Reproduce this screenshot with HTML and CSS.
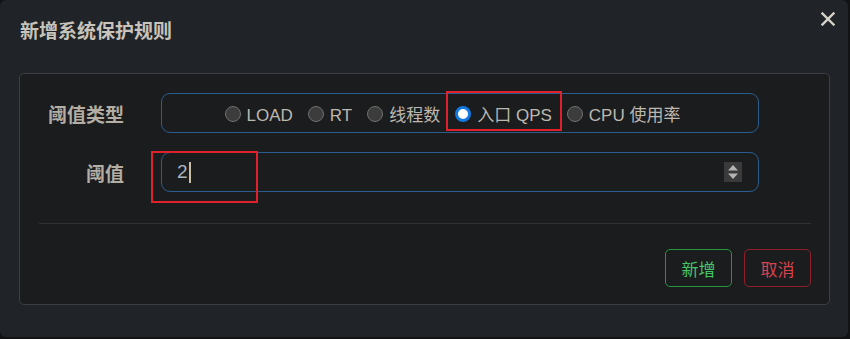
FILE: index.html
```html
<!DOCTYPE html>
<html lang="zh-CN">
<head>
    <meta charset="UTF-8">
    <meta name="viewport" content="width=device-width, initial-scale=1.0">
    <title>新增系统保护规则</title>
    <link rel="stylesheet" href="styles.css">
</head>
<body>
    <div class="modal">
        <div class="modal-header">
            <h4 class="modal-title">新增系统保护规则</h4>
            <button class="close" type="button" aria-label="关闭">
                <svg width="14" height="14" viewBox="0 0 14 14">
                    <path d="M1.5 1.5 L12.5 12.5 M12.5 1.5 L1.5 12.5" stroke="#d6d2ca" stroke-width="2.4" stroke-linecap="square"/>
                </svg>
            </button>
        </div>

        <form class="panel">
            <div class="form-row">
                <label class="form-label">阈值类型</label>
                <div class="radio-group">
                    <label class="radio"><span class="dot"></span>LOAD</label>
                    <label class="radio"><span class="dot"></span>RT</label>
                    <label class="radio"><span class="dot"></span>线程数</label>
                    <label class="radio"><span class="dot checked"></span>入口 QPS</label>
                    <label class="radio"><span class="dot"></span>CPU 使用率</label>
                </div>
            </div>

            <div class="form-row">
                <label class="form-label">阈值</label>
                <div class="number-input">
                    <span class="value">2</span><span class="caret"></span>
                    <span class="spinner">
                        <svg width="18" height="20" viewBox="0 0 18 20">
                            <path d="M9 3 L14 8.5 L4 8.5 Z M4 11.5 L14 11.5 L9 17 Z" fill="#b4b4b4"/>
                        </svg>
                    </span>
                </div>
            </div>

            <hr class="divider">

            <div class="actions">
                <button class="btn btn-success" type="button">新增</button>
                <button class="btn btn-danger" type="button">取消</button>
            </div>
        </form>

        <!-- 标注框 -->
        <div class="annot annot-qps"></div>
        <div class="annot annot-value"></div>
    </div>
</body>
</html>
```

FILE: styles.css
```css
body {
    margin: 0;
    background: #121314;
    font-family: "Liberation Sans", "Noto Sans CJK SC", sans-serif;
}
.modal {
    position: relative;
    width: 848px;
    height: 337px;
    box-sizing: border-box;
    background: #202327;
    border-radius: 6px;
}
.modal-header {
    display: flex;
    justify-content: space-between;
    align-items: flex-start;
    height: 73px;
    box-sizing: border-box;
    padding: 18px 13px 0 20px;
}
.modal-title {
    margin: 0;
    font-size: 19px;
    line-height: 28px;
    font-weight: bold;
    color: #c9c4bb;
}
.close {
    margin-top: -6px;
    padding: 0;
    border: 0;
    background: none;
    line-height: 0;
}
.panel {
    margin: 0 18px 0 19px;
    padding: 19px 18px 17px 19px;
    border: 1px solid #3b3e42;
    border-radius: 5px;
    background: #1b1c1e;
}
.form-row {
    display: flex;
    align-items: center;
    gap: 37px;
    margin-bottom: 19px;
}
.form-row:last-of-type {
    margin-bottom: 0;
}
.form-label {
    width: 85px;
    text-align: right;
    font-size: 19px;
    font-weight: bold;
    color: #b3ada3;
}
.radio-group,
.number-input {
    display: flex;
    align-items: center;
    width: 598px;
    height: 40px;
    box-sizing: border-box;
    border: 1px solid #2a5c8e;
    border-radius: 9px;
}
.radio-group {
    justify-content: center;
    padding-top: 5px;
}
.radio {
    display: flex;
    align-items: center;
    margin-right: 15px;
    font-size: 17px;
    line-height: 20px;
    color: #bdb8af;
}
.dot {
    flex-shrink: 0;
    box-sizing: border-box;
    width: 16px;
    height: 16px;
    margin: -4px 6px 0 0;
    border: 1px solid #707070;
    border-radius: 50%;
    background: #3c3c3c;
}
.dot.checked {
    border: 3px solid #1279e0;
    background: #fff;
}
.number-input {
    padding: 0 16px 0 15px;
    font-size: 19px;
    color: #aab4c0;
}
.caret {
    width: 2px;
    height: 21px;
    margin-left: 1px;
    background: #c9bfa8;
}
.spinner {
    margin-left: auto;
    width: 18px;
    height: 20px;
    background: #3a3a3a;
    line-height: 0;
}
.divider {
    margin: 31px 0 25px;
    border: 0;
    border-top: 1px solid #2e3033;
}
.actions {
    display: flex;
    justify-content: flex-end;
    gap: 12px;
}
.btn {
    width: 67px;
    height: 38px;
    padding: 0;
    border-radius: 5px;
    background: transparent;
    font-family: "Noto Sans CJK SC", sans-serif;
    font-size: 17px;
}
.btn-success {
    border: 1px solid #24953f;
    color: #45c467;
}
.btn-danger {
    border: 1px solid #8f1f2b;
    color: #d8434f;
}
.annot {
    position: absolute;
    box-sizing: border-box;
    border: 2px solid #e0202b;
}
.annot-qps {
    left: 446px;
    top: 91px;
    width: 116px;
    height: 40px;
}
.annot-value {
    left: 151px;
    top: 151px;
    width: 107px;
    height: 52px;
}
```
